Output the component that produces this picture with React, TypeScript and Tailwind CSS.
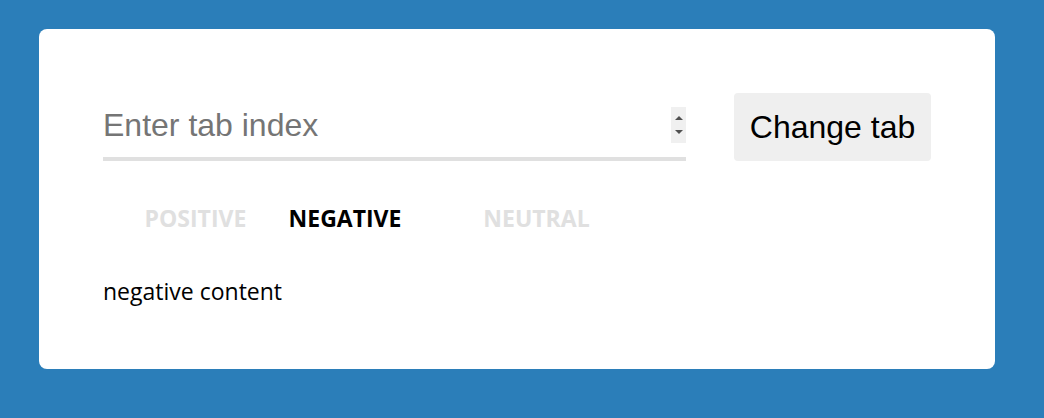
import { useState } from "react";

const TABS = [
  { label: "POSITIVE", width: "w-[185px]" },
  { label: "NEGATIVE", width: "w-[114px]" },
  { label: "NEUTRAL", width: "w-[269px]" },
];

export default function App() {
  const [active, setActive] = useState(1);
  const [value, setValue] = useState("");

  return (
    <div className="h-[418px] w-full bg-[#2b7eb9] pl-[39px] pt-[29px]">
      <div className="w-[956px] h-[340px] rounded-lg bg-white p-16">
        {/* input row */}
        <div className="flex items-start gap-12">
          <div className="flex h-[68px] w-[583px] items-center border-b-4 border-[#e0e0e0]">
            <input
              value={value}
              onChange={(e) => setValue(e.target.value)}
              placeholder="Enter tab index"
              className="min-w-0 flex-1 bg-transparent text-[32px] text-black outline-none placeholder:text-[#757575]"
              style={{ fontFamily: '"Liberation Sans", Arial, sans-serif' }}
            />
            <div className="flex h-9 w-[15px] flex-col items-center justify-center gap-[10px] bg-[#f0f0f0]">
              <svg width="8" height="4" viewBox="0 0 8 4">
                <path d="M0 4 L4 0 L8 4 Z" fill="#505050" />
              </svg>
              <svg width="8" height="4" viewBox="0 0 8 4">
                <path d="M0 0 L4 4 L8 0 Z" fill="#505050" />
              </svg>
            </div>
          </div>
          <button
            onClick={() => {
              const n = parseInt(value, 10);
              if (!isNaN(n) && n >= 0 && n < TABS.length) setActive(n);
            }}
            className="h-[68px] w-[197px] rounded bg-[#efefef] text-[32px] text-black"
            style={{ fontFamily: '"Liberation Sans", Arial, sans-serif' }}
          >
            Change tab
          </button>
        </div>

        {/* tabs */}
        <div
          className="mt-[42px] flex"
          style={{ fontFamily: '"Open Sans", "Noto Sans", sans-serif' }}
        >
          {TABS.map((t, i) => (
            <button
              key={t.label}
              onClick={() => setActive(i)}
              className={`${t.width} text-center text-[23px] font-bold leading-[30px] ${
                i === active ? "text-black" : "text-[#e0e0e0]"
              }`}
            >
              {t.label}
            </button>
          ))}
        </div>

        <div
          className="mt-[43px] text-[23px] leading-[30px] text-black"
          style={{ fontFamily: '"Open Sans", "Noto Sans", sans-serif' }}
        >
          {TABS[active].label.toLowerCase()} content
        </div>
      </div>
    </div>
  );
}
